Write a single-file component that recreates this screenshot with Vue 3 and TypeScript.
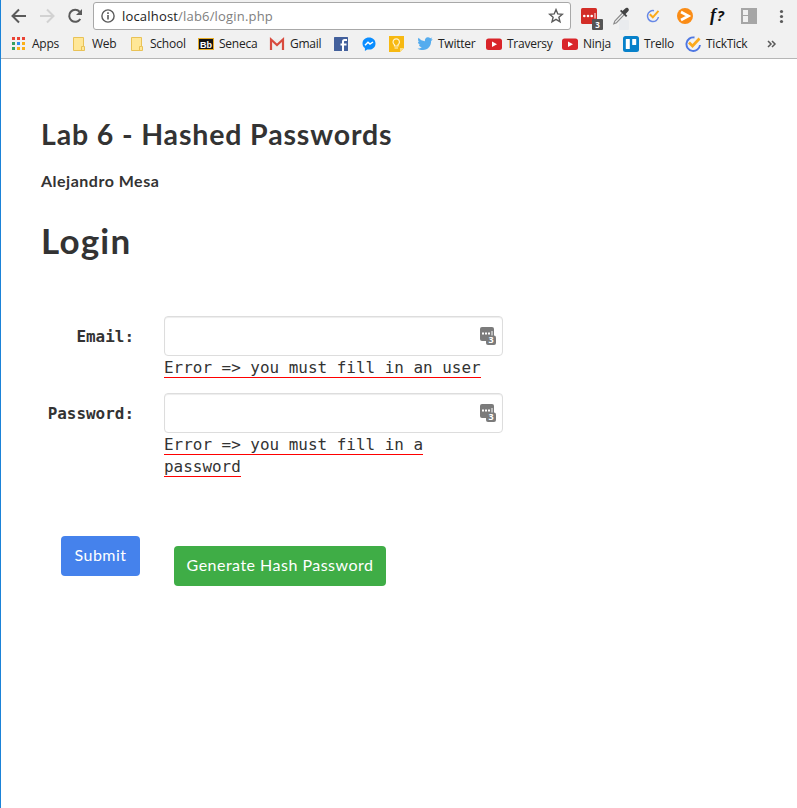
<script setup lang="ts">
interface Bookmark {
  icon: string
  label: string
}

interface Field {
  id: string
  label: string
  type: string
  error: string
}

const bookmarks: Bookmark[] = [
  { icon: 'apps', label: 'Apps' },
  { icon: 'folder', label: 'Web' },
  { icon: 'folder', label: 'School' },
  { icon: 'blackboard', label: 'Seneca' },
  { icon: 'gmail', label: 'Gmail' },
  { icon: 'facebook', label: '' },
  { icon: 'messenger', label: '' },
  { icon: 'keep', label: '' },
  { icon: 'twitter', label: 'Twitter' },
  { icon: 'youtube', label: 'Traversy' },
  { icon: 'youtube', label: 'Ninja' },
  { icon: 'trello', label: 'Trello' },
  { icon: 'ticktick', label: 'TickTick' },
]

const appColors = ['#ea4335', '#ea4335', '#ea4335', '#34a160', '#2d8cf0', '#fbaf17', '#34a160', '#fbaf17', '#fbaf17']

const fields: Field[] = [
  { id: 'email', label: 'Email:', type: 'text', error: 'Error => you must fill in an user' },
  { id: 'password', label: 'Password:', type: 'password', error: 'Error => you must fill in a password' },
]
</script>

<template>
  <div class="window">
    <header class="chrome">
      <div class="toolbar">
        <svg class="nav" viewBox="0 0 28 32"><path d="M21 16H8M14 9.500L7.500 16l6.500 6.500" fill="none" stroke="#5a5a5a" stroke-width="2" /></svg>
        <svg class="nav" viewBox="0 0 28 32"><path d="M7 16h13M14 9.500l6.500 6.500-6.500 6.500" fill="none" stroke="#d2d2d2" stroke-width="2" /></svg>
        <svg class="nav" viewBox="0 0 28 32"><path d="M19.300 19a6 6 0 1 1-.7-7.300" fill="none" stroke="#5a5a5a" stroke-width="2" /><path d="M21 9v6h-6z" fill="#5a5a5a" /></svg>
        <div class="address">
          <svg class="info" viewBox="0 0 14 14"><circle cx="7" cy="7" r="6.100" fill="none" stroke="#5a5a5a" stroke-width="1.400" /><path d="M7 6v4.500M7 3.300v1.600" stroke="#5a5a5a" stroke-width="1.600" /></svg>
          <span class="url">localhost<span class="path">/lab6/login.php</span></span>
          <svg class="star" viewBox="0 0 16 16"><path d="M8 1.600l1.800 4.300 4.600.4-3.500 3 1.100 4.500-4-2.400-4 2.400 1.100-4.500-3.500-3 4.600-.4z" fill="none" stroke="#5a5a5a" stroke-width="1.400" /></svg>
        </div>
        <svg class="ext" viewBox="0 0 32 32">
          <rect x="8" y="8" width="16" height="16" rx="1.500" fill="#d32d27" />
          <circle cx="11.300" cy="16" r="1.300" fill="#fff" /><circle cx="15" cy="16" r="1.300" fill="#fff" /><circle cx="18.700" cy="16" r="1.300" fill="#fff" /><path d="M22 13v5.500" stroke="#fff" />
          <rect x="19" y="19" width="11" height="11" rx="1" fill="#555" /><text x="24.500" y="28" text-anchor="middle" class="badge">3</text>
        </svg>
        <svg class="ext" viewBox="0 0 32 32">
          <rect x="14" y="20" width="10" height="10" rx="1" fill="#e9ebee" />
          <path d="M17.500 13l-7.700 8-1 2.700 2.700-1 7.700-8" fill="#f4f4f4" stroke="#8a8a8a" stroke-width="1.100" />
          <path d="M15 11l6 6 1.300-1.300-1.700-1.700 2.600-2.700c2-2-1-4.800-3-2.800L17.500 11l-1.200-1.200z" fill="#444" />
        </svg>
        <svg class="ext" viewBox="0 0 32 32"><path d="M17 10.700A5.500 5.500 0 1 0 21.400 17" fill="none" stroke="#6788e6" stroke-width="1.500" /><path d="M12.800 14.300l3 3 5.700-6.500" fill="none" stroke="#fba91a" stroke-width="2" /></svg>
        <svg class="ext" viewBox="0 0 32 32"><circle cx="16" cy="16" r="8" fill="#fa8c16" /><path d="M12 12l7.500 4-7.500 4" fill="none" stroke="#fff" stroke-width="2.600" /></svg>
        <span class="ext whatfont">f<span class="mark">?</span></span>
        <svg class="ext" viewBox="0 0 32 32"><rect x="8" y="8" width="16" height="16" fill="#a6a6a6" /><rect x="10" y="10" width="5" height="5" fill="#f1f1f1" /><rect x="10" y="16" width="5" height="6" fill="#f1f1f1" /></svg>
        <svg class="ext" viewBox="0 0 32 32"><g fill="#5a5a5a"><circle cx="16.500" cy="11.500" r="1.600" /><circle cx="16.500" cy="16.500" r="1.600" /><circle cx="16.500" cy="21.500" r="1.600" /></g></svg>
      </div>
      <nav class="bookmarks">
        <a v-for="(mark, i) in bookmarks" :key="i" class="bookmark">
          <svg class="icon" viewBox="0 0 16 16">
            <template v-if="mark.icon === 'apps'">
              <rect v-for="(color, n) in appColors" :key="n" :x="1 + (n % 3) * 5" :y="1 + Math.floor(n / 3) * 5" width="3" height="3" :fill="color" />
            </template>
            <template v-else-if="mark.icon === 'folder'">
              <path d="M2.500 1.500h10v9h1v4h-11z" fill="#ffe797" stroke="#e9c256" /><path d="M10.500 14.500v-4h2" fill="none" stroke="#e9c256" />
            </template>
            <template v-else-if="mark.icon === 'blackboard'">
              <rect x=".5" y="2.500" width="15" height="11" fill="#141414" stroke="#e7ad27" /><text x="8" y="11.500" text-anchor="middle" class="bb">Bb</text>
            </template>
            <template v-else-if="mark.icon === 'gmail'">
              <path d="M1 3h14v11H1z" fill="#eee" /><path d="M2 14V3.500l6 5.500 6-5.500V14" fill="none" stroke="#d84b3f" stroke-width="2.200" />
            </template>
            <template v-else-if="mark.icon === 'facebook'">
              <rect x="1" y="1" width="14" height="14" rx=".5" fill="#43609c" /><path d="M10 15V5.500Q10 4 11.500 4H14M7.500 8.500h6" fill="none" stroke="#fff" stroke-width="2" />
            </template>
            <template v-else-if="mark.icon === 'messenger'">
              <path d="M8 1.500C4.300 1.500 1.500 4 1.500 7.500c0 2 .9 3.500 2.400 4.600V15l2.300-1.600c5 1 8.300-1.900 8.300-5.900 0-3.500-2.800-6-6.500-6z" fill="#0a8dff" /><path d="M4 9.300l3-3 2 1.800L12 6" fill="none" stroke="#fff" stroke-width="1.500" />
            </template>
            <template v-else-if="mark.icon === 'keep'">
              <path d="M1 0h15v12l-4 4H1z" fill="#f7b912" /><path d="M12 16v-4h4z" fill="#ffdf7e" /><path d="M6.500 10V8.700a3.200 3.200 0 1 1 3.500 0V10zM6.500 12h3.500" fill="none" stroke="#fff4cf" stroke-width="1.200" />
            </template>
            <template v-else-if="mark.icon === 'twitter'">
              <path d="M15.800 3.500l-1.700 1.600C14.300 10 11 14 6 14c-2.200 0-4-.5-5.500-1.500 1.800.1 3.200-.3 4.300-1.300-1.400-.1-2.400-.9-2.800-2.200h1.300C1.800 8.400 1 7.200 1 5.700l1.300.4C1 5 .6 3.300 1.500 1.800c1.700 2 3.800 3.200 6.400 3.400-.4-2.200 1-4 3-4 1 0 1.800.3 2.400 1l2-.7-1.200 1.800z" fill="#55acee" />
            </template>
            <template v-else-if="mark.icon === 'youtube'">
              <rect x="0" y="2.500" width="16" height="11.500" rx="2.500" fill="#d9252a" /><path d="M6 5.500l5 2.700-5 2.700z" fill="#fff" />
            </template>
            <template v-else-if="mark.icon === 'trello'">
              <rect width="16" height="16" rx="2.500" fill="#0781ca" /><rect x="2.800" y="3" width="4" height="10" rx=".5" fill="#fff" /><rect x="9.200" y="3" width="4" height="6" rx=".5" fill="#fff" />
            </template>
            <template v-else>
              <path d="M9.500 1.500a6.800 6.800 0 1 0 5.500 7.500" fill="none" stroke="#4e77e2" stroke-width="1.900" /><path d="M4 6.500l3.500 3.500 7-7.500" fill="none" stroke="#fba91a" stroke-width="2.700" />
            </template>
          </svg>
          <span v-if="mark.label" class="name">{{ mark.label }}</span>
        </a>
        <svg class="more" viewBox="0 0 16 16"><path d="M2 5l3 3-3 3M6 5l3 3-3 3" fill="none" stroke="#5a5a5a" stroke-width="1.500" /></svg>
      </nav>
    </header>

    <main class="page">
      <h2 class="title">Lab 6 - Hashed Passwords</h2>
      <h5 class="author">Alejandro Mesa</h5>
      <h1 class="heading">Login</h1>
      <form class="form" @submit.prevent>
        <div v-for="field in fields" :key="field.id" class="row">
          <label class="label" :for="field.id">{{ field.label }}</label>
          <div class="control">
            <div class="box">
              <input :id="field.id" class="input" :type="field.type" />
              <svg class="vault" viewBox="0 0 16 18"><rect width="14" height="14" rx="2" fill="#7b7b7b" /><path d="M2 6.500h2M5 6.500h2M8 6.500h2" stroke="#fff" stroke-width="1.800" /><path d="M12 4v5" stroke="#fff" /><rect x="6" y="8.500" width="10" height="9.500" rx="2" fill="#7b7b7b" /><text x="11.200" y="16.300" text-anchor="middle" class="count">3</text></svg>
            </div>
            <div class="message"><span class="error">{{ field.error }}</span></div>
          </div>
        </div>
        <div class="actions">
          <button class="btn submit" type="submit">Submit</button>
          <button class="btn generate" type="button">Generate Hash Password</button>
        </div>
      </form>
    </main>
  </div>
</template>

<style>
body {
  margin: 0;
  background: #fff;
}
</style>

<style scoped>
.window {
  box-sizing: border-box;
  height: 808px;
  border-left: 1px solid #1b83d8;
  overflow: hidden;
  color: #333;
}
.chrome {
  box-sizing: border-box;
  height: 59px;
  background: #f1f1f1;
  border-bottom: 1px solid #b6b6b6;
  font-family: "Open Sans", "Noto Sans", sans-serif;
}
.toolbar {
  display: flex;
  height: 32px;
  padding-left: 4px;
}
.nav {
  width: 28px;
  height: 32px;
  flex: none;
}
.address {
  box-sizing: border-box;
  display: flex;
  align-items: center;
  width: 478px;
  height: 28px;
  margin: 2px 2px 0 4px;
  padding: 0 6px 0 7px;
  border: 1px solid #a8a8a8;
  border-radius: 3px;
  background: #fff;
}
.info {
  width: 14px;
  height: 14px;
}
.url {
  flex: 1;
  margin-left: 7px;
  font-size: 13px;
  line-height: 18px;
  letter-spacing: 0.18px;
  color: #222;
}
.path {
  color: #808080;
}
.star {
  width: 16px;
  height: 16px;
}
.ext {
  width: 32px;
  height: 32px;
  flex: none;
}
.badge {
  font: bold 8px "Open Sans", sans-serif;
  fill: #fff;
}
.whatfont {
  font: italic bold 18px/31px "Liberation Serif", serif;
  text-align: center;
  color: #111;
}
.mark {
  margin-left: 1px;
  font: italic bold 15px "Open Sans", sans-serif;
}
.bookmarks {
  display: grid;
  grid-template-columns: 60px 58px 69px 71px 64px 28px 27px 29px 69px 76px 61px 62px 81px 20px;
  align-items: center;
  height: 24px;
  padding-left: 10px;
}
.bookmark {
  display: flex;
  align-items: center;
  white-space: nowrap;
}
.icon {
  width: 16px;
  height: 16px;
  flex: none;
}
.bb {
  font: bold 9px "Liberation Sans", sans-serif;
  fill: #fff;
}
.name {
  margin-left: 5px;
  font-size: 12px;
  line-height: 16px;
  letter-spacing: -0.25px;
  color: #222;
}
.more {
  width: 16px;
  height: 16px;
}
.page {
  padding: 58px 40px 0;
  font-family: Lato, sans-serif;
}
.title,
.author,
.heading {
  margin: 0;
  color: #333;
}
.title {
  font-size: 28.500px;
  line-height: 34px;
  letter-spacing: 0.850px;
}
.author {
  margin-top: 20px;
  font-size: 16px;
  line-height: 20px;
  letter-spacing: 0.5px;
}
.heading {
  margin-top: 29px;
  font-size: 35px;
  line-height: 40px;
  letter-spacing: 1.200px;
}
.form {
  margin-top: 56px;
  font-family: "DejaVu Sans Mono", monospace;
  font-size: 15.950px;
}
.row {
  display: grid;
  grid-template-columns: 93px 339px;
  column-gap: 30px;
  margin-bottom: 14px;
}
.label {
  text-align: right;
  font-weight: bold;
  line-height: 42px;
}
.box {
  box-sizing: border-box;
  display: flex;
  align-items: center;
  height: 40px;
  padding: 0 6px 0 12px;
  border: 1px solid #ddd;
  border-radius: 4px;
  box-shadow: inset 0 1px 1px rgba(0, 0, 0, 0.075);
}
.input {
  flex: 1;
  min-width: 0;
  border: 0;
  outline: 0;
  background: transparent;
}
.vault {
  width: 16px;
  height: 18px;
}
.count {
  font: bold 9px "Open Sans", sans-serif;
  fill: #fff;
}
.message {
  padding-top: 1px;
  line-height: 22px;
}
.error {
  border-bottom: 1px solid red;
}
.actions {
  display: flex;
  gap: 34px;
  margin-top: 58px;
  padding-left: 20px;
}
.btn {
  height: 40px;
  padding: 0 0 2px;
  border: 0;
  border-radius: 4px;
  font: 16px/22px Lato, sans-serif;
  letter-spacing: 0.480px;
  color: #fff;
}
.submit {
  width: 79px;
  background: #4582ec;
}
.generate {
  width: 212px;
  margin-top: 10px;
  background: #3fad46;
}
</style>
